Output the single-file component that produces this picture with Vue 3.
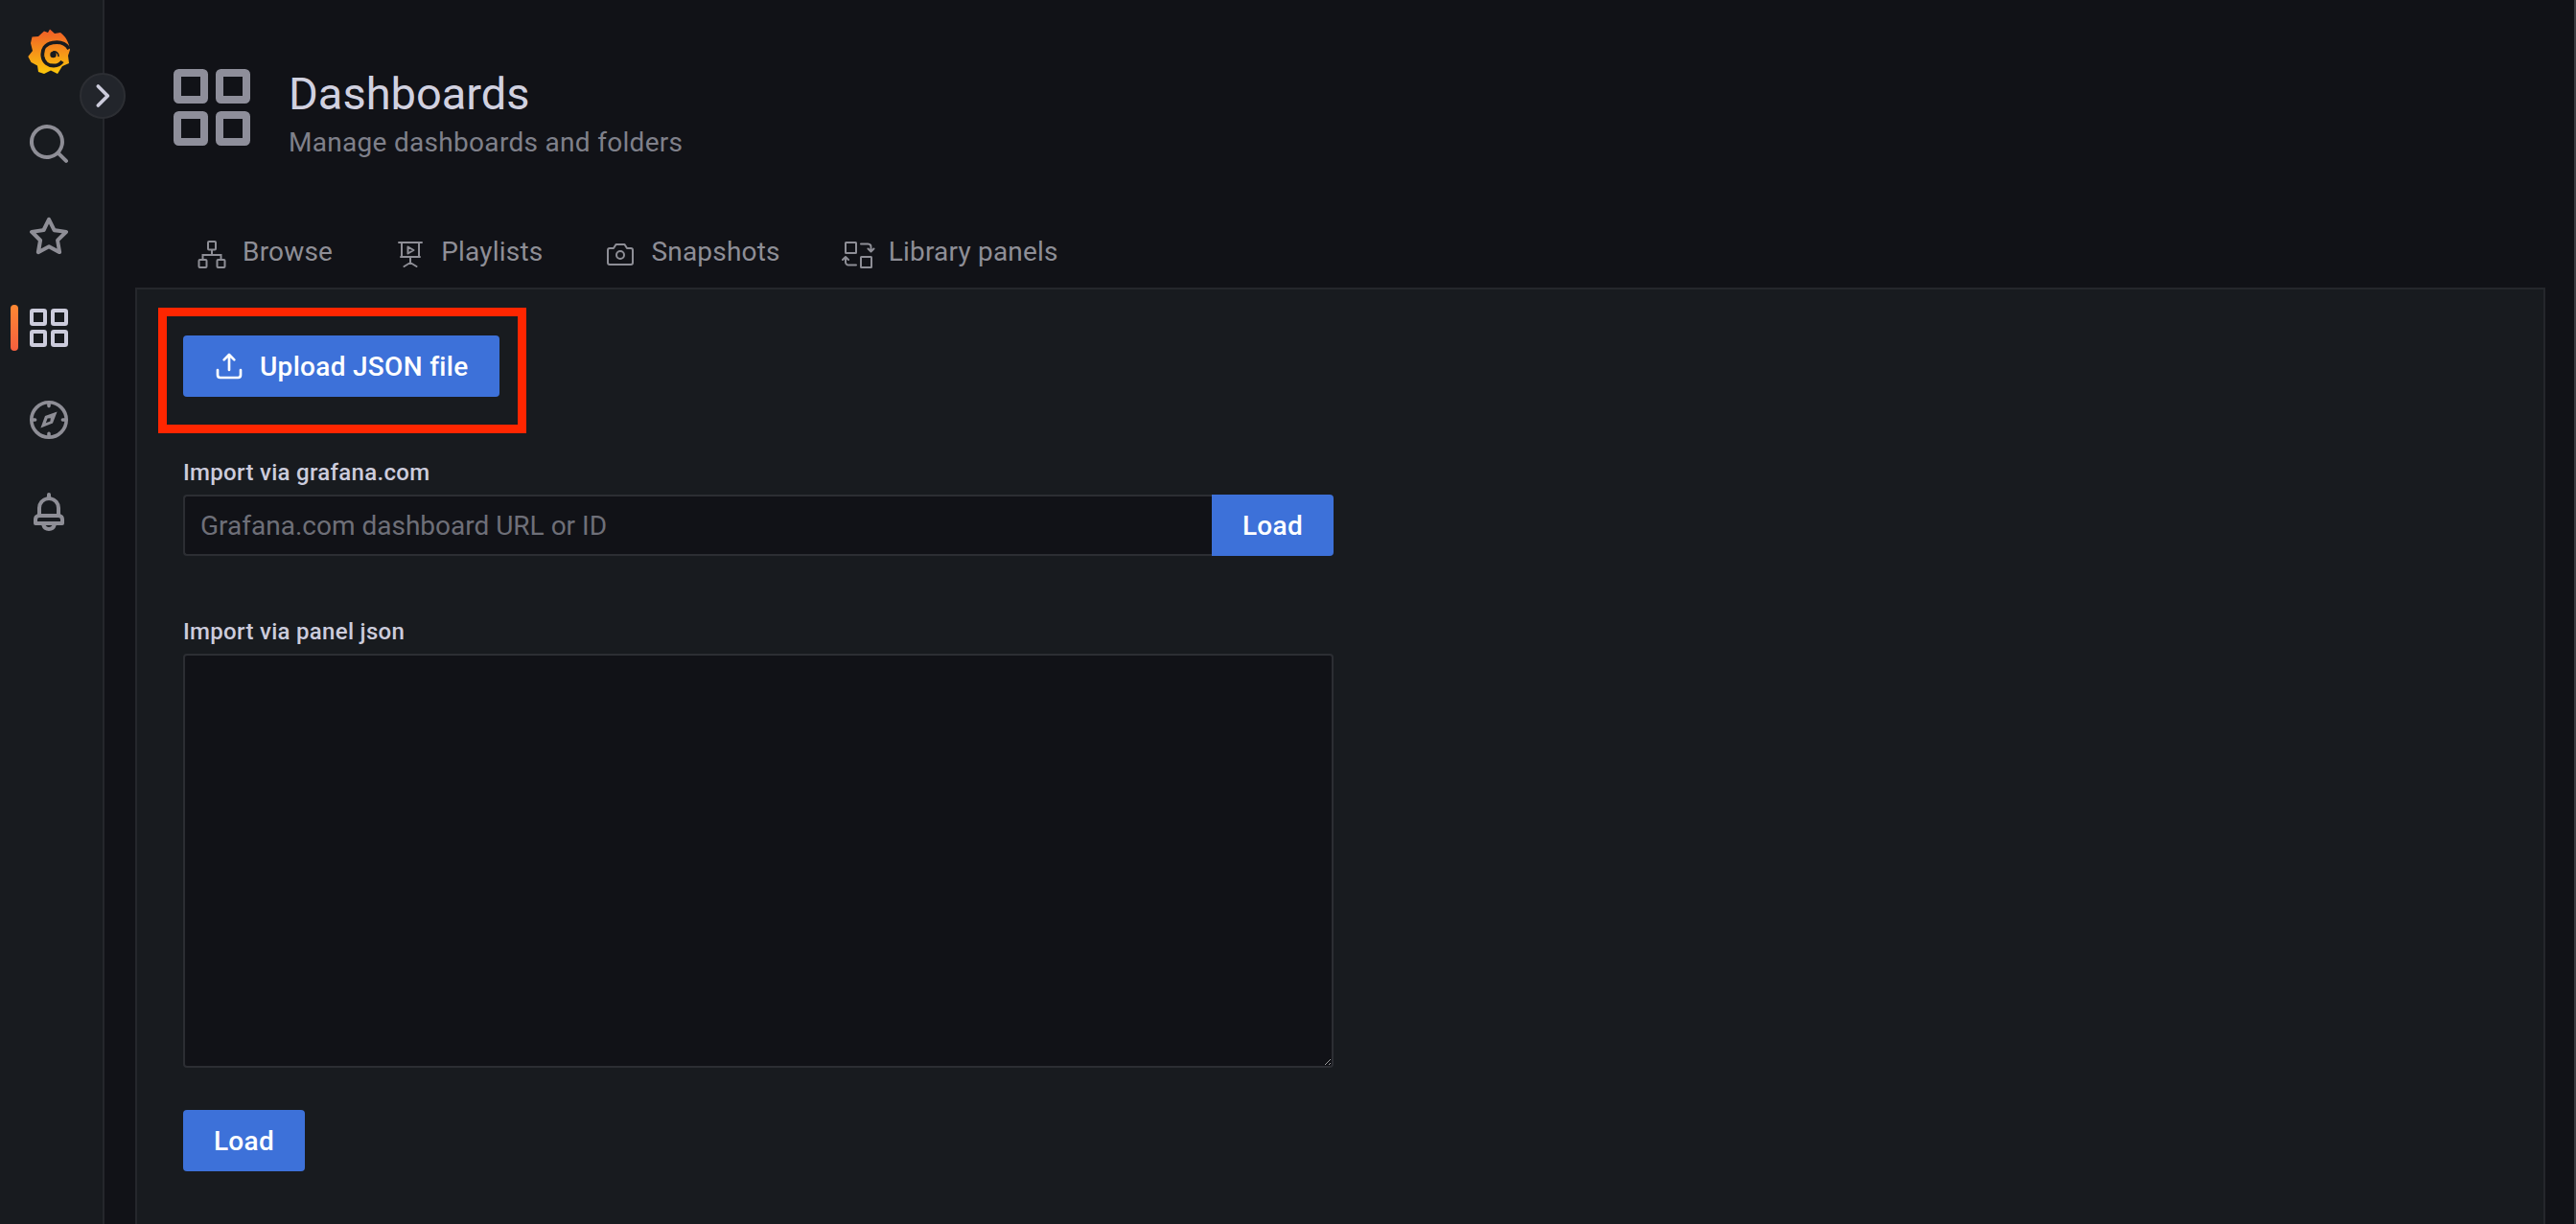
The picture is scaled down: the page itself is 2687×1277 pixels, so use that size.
<template>
  <div class="page">
    <aside class="sidebar">
      <div class="nav-logo">
        <svg class="logo" viewBox="0 0 44 48">
          <defs>
            <linearGradient id="logoGrad" gradientUnits="userSpaceOnUse" x1="0" y1="0" x2="0" y2="48">
              <stop offset="0" stop-color="#f05a28" />
              <stop offset="1" stop-color="#fbca0a" />
            </linearGradient>
          </defs>
          <path fill="url(#logoGrad)" d="M23 .5L28 5l6-1c5 3.500 9 10 10 18l-2 6 1 8-7 3-5 8-7-3.500-7 3.500-6-2-1-6.500-6.500-3.500L.3 29l4.700-6-2-8 1.500-6.500L11 8l6-5.500L21 4z" />
          <path fill="none" stroke="#181b1f" stroke-width="3.800" d="M43 21C39 14 32 13.500 26 14.500C18 16 14.500 22 15.500 29C16.500 35 21 38.500 27 38.500C31 38.500 34 37 36 34" />
          <circle cx="26.500" cy="27" r="3.200" fill="#181b1f" />
          <path fill="none" stroke="#181b1f" stroke-width="1.600" stroke-linecap="round" d="M26.500 24C29.500 23.500 32 25.500 32 28.500" />
        </svg>
      </div>
      <div v-for="item in navItems" :key="item.name" class="nav-item" :class="{ active: item.active }">
        <svg class="nav-icon" viewBox="0 0 24 24" v-html="item.svg"></svg>
      </div>
      <button class="toggle">
        <svg viewBox="0 0 24 24"><path d="M8.500 4.500L16 12l-7.500 7.500" fill="none" stroke="currentColor" stroke-width="2.800" stroke-linecap="round" stroke-linejoin="round" /></svg>
      </button>
    </aside>

    <main class="main">
      <header class="page-header">
        <svg class="header-icon" viewBox="0 0 80 80">
          <g fill="none" stroke="currentColor" stroke-width="8">
            <rect x="4" y="4" width="28" height="28" rx="1.500" />
            <rect x="48" y="4" width="28" height="28" rx="1.500" />
            <rect x="4" y="48" width="28" height="28" rx="1.500" />
            <rect x="48" y="48" width="28" height="28" rx="1.500" />
          </g>
        </svg>
        <div class="header-text">
          <h1>Dashboards</h1>
          <p>Manage dashboards and folders</p>
        </div>
      </header>

      <nav class="tabs">
        <a v-for="tab in tabs" :key="tab.name" class="tab">
          <svg class="tab-icon" viewBox="0 0 30 30" v-html="tab.svg"></svg>
          <span>{{ tab.name }}</span>
        </a>
      </nav>

      <section class="panel">
        <div class="upload-wrap">
          <button class="btn upload">
            <svg viewBox="0 0 24 24"><path fill="currentColor" d="M8.710,7.710,11,5.410V15a1,1,0,0,0,2,0V5.410l2.290,2.300a1,1,0,0,0,1.420,0,1,1,0,0,0,0-1.420l-4-4a1,1,0,0,0-.33-.21,1,1,0,0,0-.76,0,1,1,0,0,0-.33.21l-4,4A1,1,0,1,0,8.710,7.710ZM21,14a1,1,0,0,0-1,1v4a1,1,0,0,1-1,1H5a1,1,0,0,1-1-1V15a1,1,0,0,0-2,0v4a3,3,0,0,0,3,3H19a3,3,0,0,0,3-3V15A1,1,0,0,0,21,14Z" /></svg>
            Upload JSON file
          </button>
          <div class="highlight"></div>
        </div>

        <label class="field-label first">Import via grafana.com</label>
        <div class="input-row">
          <input class="text-input" placeholder="Grafana.com dashboard URL or ID" />
          <button class="btn addon">Load</button>
        </div>

        <label class="field-label second">Import via panel json</label>
        <textarea class="json-area"></textarea>

        <button class="btn load">Load</button>
      </section>
    </main>
    <div class="scrollbar"></div>
  </div>
</template>

<script setup>
const navItems = [
  {
    name: 'search',
    svg: '<path fill="currentColor" d="M21.710,20.290,18,16.610A9,9,0,1,0,16.610,18l3.680,3.680a1,1,0,0,0,1.420,0A1,1,0,0,0,21.710,20.290ZM11,18a7,7,0,1,1,7-7A7,7,0,0,1,11,18Z"/>'
  },
  {
    name: 'star',
    svg: '<path fill="currentColor" d="M22,9.670A1,1,0,0,0,21.140,9l-5.690-.83L12.900,3a1,1,0,0,0-1.800,0L8.550,8.160,2.860,9a1,1,0,0,0-.81.680,1,1,0,0,0,.25,1L6.430,14.700l-1,5.680A1,1,0,0,0,6.900,21.440L12,18.770l5.100,2.670a.93.93,0,0,0,.46.12,1,1,0,0,0,.59-.19,1,1,0,0,0,.4-1l-1-5.680,4.130-4A1,1,0,0,0,22,9.670Zm-6.150,4a1,1,0,0,0-.29.88l.72,4.200-3.760-2a1.060,1.060,0,0,0-.94,0l-3.760,2,.72-4.200a1,1,0,0,0-.29-.88l-3-3,4.210-.61a1,1,0,0,0,.76-.55L12,5.700l1.880,3.820a1,1,0,0,0,.76.55l4.210.61Z"/>'
  },
  {
    name: 'dashboards',
    active: true,
    svg: '<g fill="none" stroke="currentColor" stroke-width="2"><rect x="3" y="3" width="7" height="7" rx=".6"/><rect x="14" y="3" width="7" height="7" rx=".6"/><rect x="3" y="14" width="7" height="7" rx=".6"/><rect x="14" y="14" width="7" height="7" rx=".6"/></g>'
  },
  {
    name: 'explore',
    svg: '<g fill="none" stroke="currentColor" stroke-width="1.800"><circle cx="12" cy="12" r="9.100"/><path d="M12 3v1.800M12 19.200V21M3 12h1.800M19.200 12H21" stroke-linecap="round"/></g><path fill="currentColor" fill-rule="evenodd" d="M16.300 7.700l-2.300 6.100-6.300 2.500 2.300-6.300zM11.300 11.300l-.9 2.300 2.300-.9.200-1.600z"/>'
  },
  {
    name: 'alerting',
    svg: '<path fill="currentColor" d="M18,13.180V10a6,6,0,0,0-5-5.910V3a1,1,0,0,0-2,0V4.090A6,6,0,0,0,6,10v3.180A3,3,0,0,0,4,16v2a1,1,0,0,0,1,1H8.140a4,4,0,0,0,7.720,0H19a1,1,0,0,0,1-1V16A3,3,0,0,0,18,13.180ZM8,10a4,4,0,0,1,8,0v3H8Zm4,10a2,2,0,0,1-1.720-1h3.440A2,2,0,0,1,12,20Zm6-3H6V16a1,1,0,0,1,1-1H17a1,1,0,0,1,1,1Z"/>'
  }
]

const tabs = [
  {
    name: 'Browse',
    svg: '<g fill="none" stroke="currentColor" stroke-width="2"><rect x="11" y="2" width="8" height="8.500" rx="1"/><rect x="1.500" y="21" width="8" height="8" rx="1"/><rect x="20.500" y="21" width="8" height="8" rx="1"/><path d="M15 10.500V16M5.500 21v-5h19v5"/></g>'
  },
  {
    name: 'Playlists',
    svg: '<g fill="none" stroke="currentColor" stroke-width="2" stroke-linejoin="round" stroke-linecap="round"><path d="M3 3h24M6 3v15h18V3M5 18h20M15 18v6M8.500 28l6.500-4 6.500 4"/><path d="M12.500 7.500l6 3.500-6 3.500z"/></g>'
  },
  {
    name: 'Snapshots',
    svg: '<g fill="none" stroke="currentColor" stroke-width="2" stroke-linejoin="round"><path d="M4 9h4l2.500-4h9L22 9h4a2 2 0 0 1 2 2v13a2 2 0 0 1-2 2H4a2 2 0 0 1-2-2V11a2 2 0 0 1 2-2z"/><circle cx="15" cy="16" r="4"/></g>'
  },
  {
    name: 'Library panels',
    svg: '<g fill="none" stroke="currentColor" stroke-width="2" stroke-linecap="round" stroke-linejoin="round"><rect x="2" y="3" width="11" height="11" rx=".5"/><rect x="18" y="18" width="11" height="11" rx=".5"/><path d="M18 4.500h7.500a3 3 0 0 1 3 3V12M25.500 9.500l3 3 3-3M13 26.500H5a3 3 0 0 1-3-3V18M-1 21l3-3 3 3"/></g>'
  }
]
</script>

<style scoped>
.page {
  display: flex;
  position: relative;
  height: 1277px;
  overflow: hidden;
  background: #111217;
  font-family: Roboto, "Liberation Sans", sans-serif;
  letter-spacing: 0.3px;
  color: #ccccdc;
}

.sidebar {
  position: relative;
  flex: 0 0 109px;
  box-sizing: border-box;
  border-right: 2px solid #25272c;
  background: #181b1f;
  display: flex;
  flex-direction: column;
  align-items: stretch;
  padding-top: 22px;
}

.nav-logo {
  height: 64px;
  display: flex;
  justify-content: center;
  align-items: center;
  padding-right: 5px;
}

.logo {
  width: 44px;
  height: 48px;
}

.nav-item {
  position: relative;
  height: 96px;
  display: flex;
  align-items: center;
  justify-content: center;
  padding-right: 5px;
  color: #8e8e96;
}

.nav-logo + .nav-item {
  margin-top: 16px;
}

.nav-icon {
  width: 48px;
  height: 48px;
}

.nav-item.active {
  color: #ccccdc;
}

.nav-item.active::before {
  content: "";
  position: absolute;
  left: 11px;
  top: 24px;
  width: 8px;
  height: 48px;
  border-radius: 4px;
  background: linear-gradient(#ff8833, #f55f3e);
}

.toggle {
  position: absolute;
  left: 83px;
  top: 76px;
  width: 48px;
  height: 48px;
  padding: 6px;
  box-sizing: border-box;
  border: 2px solid #2c2e33;
  border-radius: 50%;
  background: #22252b;
  color: #ccccdc;
}

.toggle svg {
  display: block;
  width: 100%;
  height: 100%;
}

.main {
  flex: 1;
  min-width: 0;
  padding: 0 32px;
}

.page-header {
  display: flex;
  align-items: flex-start;
  padding: 72px 0 0 40px;
  height: 244px;
  box-sizing: border-box;
}

.header-icon {
  width: 80px;
  height: 80px;
  color: #8e8e9a;
  margin-right: 40px;
}

.header-text h1 {
  margin: 0;
  padding-top: 2px;
  font-size: 47px;
  line-height: 48px;
  font-weight: 400;
  letter-spacing: 0;
  color: #d1d1e0;
}

.header-text p {
  margin: 11px 0 0;
  font-size: 28px;
  line-height: 32px;
  color: #7f808a;
}

.tabs {
  display: flex;
  height: 56px;
  padding-left: 65px;
  align-items: flex-start;
}

.tab {
  display: flex;
  align-items: center;
  height: 36px;
  margin-right: 66px;
  font-size: 28px;
  letter-spacing: 0.2px;
  color: #8e8e96;
}

.tab-icon {
  width: 30px;
  height: 30px;
  margin-top: 6px;
  margin-right: 17px;
  overflow: visible;
}

.panel {
  box-sizing: border-box;
  min-height: 1000px;
  padding: 48px;
  border: 2px solid #25272c;
  background: #181b1f;
}

.btn {
  height: 64px;
  border: 0;
  border-radius: 4px;
  background: #3d71d9;
  color: #fff;
  font-family: inherit;
  font-size: 28px;
  font-weight: 500;
  letter-spacing: inherit;
  padding: 0 32px;
}

.upload-wrap {
  position: relative;
  width: max-content;
}

.upload {
  display: flex;
  align-items: center;
  width: 330px;
  padding: 0 0 0 32px;
  box-sizing: border-box;
}

.upload svg {
  width: 32px;
  height: 32px;
  margin-right: 16px;
}

.highlight {
  position: absolute;
  left: -26px;
  top: -29px;
  right: -28px;
  bottom: -38px;
  border: 9px solid #ff2600;
  pointer-events: none;
}

.field-label {
  display: block;
  font-size: 24px;
  line-height: 32px;
  font-weight: 500;
  color: #ccccdc;
}

.field-label.first {
  margin-top: 63px;
  margin-bottom: 7px;
}

.field-label.second {
  margin-top: 63px;
  margin-bottom: 7px;
}

.input-row {
  display: flex;
  width: 1200px;
  height: 64px;
}

.text-input {
  flex: 1;
  min-width: 0;
  box-sizing: border-box;
  padding: 0 16px;
  border: 2px solid #2c2e33;
  border-right: 0;
  border-radius: 4px 0 0 4px;
  background: #111217;
  color: #ccccdc;
  font-family: inherit;
  font-size: 28px;
  letter-spacing: 0;
  outline: none;
}

.text-input::placeholder {
  color: #6e6f78;
  opacity: 1;
}

.addon {
  border-radius: 0 4px 4px 0;
  width: 127px;
  padding: 0;
}

.json-area {
  display: block;
  box-sizing: border-box;
  width: 1200px;
  height: 432px;
  border: 2px solid #2c2e33;
  border-radius: 4px;
  background: #111217;
  outline: none;
}

.load {
  display: block;
  width: 127px;
  margin-top: 44px;
  padding: 0;
}

.scrollbar {
  position: absolute;
  right: 0;
  top: 0;
  bottom: 0;
  width: 2px;
  background: #3c3d42;
}
</style>

<style>
html,
body {
  margin: 0;
  overflow: hidden;
  background: #111217;
}
</style>
